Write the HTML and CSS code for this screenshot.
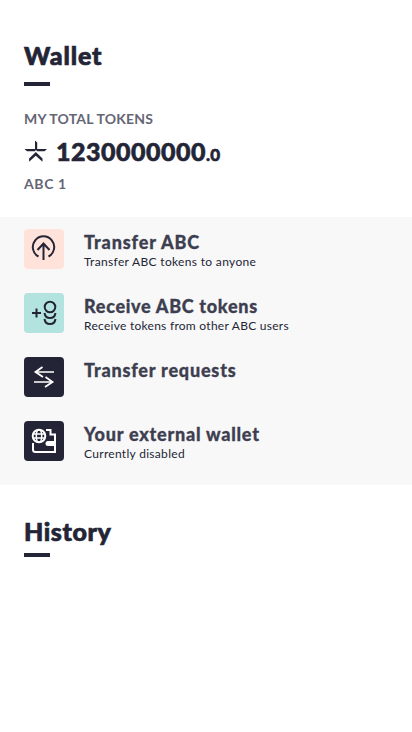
FILE: index.html
```html
<!DOCTYPE html>
<html lang="en">
<head>
<meta charset="utf-8">
<title>Wallet</title>
<link rel="stylesheet" href="styles.css">
</head>
<body>
<header class="summary">
  <h1 class="heading"><span class="wallet">Wallet</span></h1>
  <p class="label"><span class="total">MY TOTAL TOKENS</span></p>
  <div class="balance">
    <svg class="star" viewBox="0 0 24 24" fill="#232536"><path d="M11 1.500l2.200 2v8H11zM.5 10H11v2.300H3zM13 10h10l-2.500 2.300H13zM11.800 13l6.700 6.500v3.200l-6.700-6-6.700 6v-3.200z"/></svg>
    <span class="amount">1230000000</span><span class="decimal">.0</span>
  </div>
  <p class="label"><span class="ticker">ABC 1</span></p>
</header>
<main class="actions">
  <a class="action">
    <svg class="icon peach" viewBox="0 0 40 40" fill="none" stroke="#232536" stroke-width="2"><path d="M14.500 27.500A10.700 10.700 0 1 1 24.500 27.500M19.500 31V14.500M13.500 21l6-6.500 6 6.500"/></svg>
    <div><h2><span class="t1">Transfer ABC</span></h2><p><span class="d1">Transfer ABC tokens to anyone</span></p></div>
  </a>
  <a class="action">
    <svg class="icon mint" viewBox="0 0 40 40" fill="none" stroke="#232536" stroke-width="2"><path d="M8 20h9M12.500 15.500v9M20.500 20c1 6.700 10 6.700 11 0M20.500 26c1 6.700 10 6.700 11 0"/><circle cx="26" cy="14" r="5.300"/></svg>
    <div><h2><span class="t2">Receive ABC tokens</span></h2><p><span class="d2">Receive tokens from other ABC users</span></p></div>
  </a>
  <a class="action">
    <svg class="icon navy" viewBox="0 0 40 40" fill="none" stroke="#fff" stroke-width="1.800"><path stroke="#c9ccca" stroke-width="2" d="M12 15h18M10 25h18"/><path d="M18.500 10L11.500 15l7.500 5M21.500 20l7 5-7.500 5"/></svg>
    <div><h2><span class="t3">Transfer requests</span></h2></div>
  </a>
  <a class="action">
    <svg class="icon navy" viewBox="0 0 40 40" fill="none" stroke="#fff" stroke-width="2"><path d="M22 9h4.500v4.500H31V20M9 22v6.500q0 2.500 2.500 2.500H31v-6"/><path fill="#fff" stroke="none" d="M24 20h8v5h-8a2.500 2.500 0 0 1 0-5z"/><circle cx="15" cy="15" r="6.300"/><ellipse cx="15" cy="15" rx="2.700" ry="6.300" stroke-width="1.500"/><path stroke-width="1.500" d="M9 13h12M9 17h12"/></svg>
    <div><h2><span class="t4">Your external wallet</span></h2><p><span class="d4">Currently disabled</span></p></div>
  </a>
</main>
<section class="history"><h1 class="heading"><span class="hist">History</span></h1></section>
</body>
</html>
```
FILE: styles.css
```css
* { box-sizing: border-box; }
body { margin: 0; background: #fff; color: #232536; font-family: Lato, sans-serif; }
h1, h2, p { margin: 0; }
.summary { height: 217px; padding: 39px 24px 0; }
.heading { font-size: 25px; line-height: 32px; font-weight: 900; white-space: nowrap; -webkit-text-stroke: .7px; }
.heading::after { content: ""; display: block; width: 26px; height: 4px; margin-top: 11px; background: #232536; }
.label { font-size: 14px; line-height: 20px; font-weight: 700; color: #656675; }
.heading + .label { margin-top: 23px; }
.balance { display: flex; align-items: baseline; height: 32px; margin: 6px 0 7px; line-height: 32px; font-weight: 900; -webkit-text-stroke: .6px; }
.star { width: 24px; height: 24px; margin-right: 8px; align-self: center; }
.amount { font-size: 25px; letter-spacing: .5px; }
.decimal { font-size: 17px; letter-spacing: .2px; }
.actions { height: 268px; padding: 12px 24px; background: #f8f8f8; display: flex; flex-direction: column; gap: 24px; }
.action { display: flex; gap: 20px; height: 40px; white-space: nowrap; }
.icon { width: 40px; height: 40px; flex: none; border-radius: 4px; }
.peach { background: #ffe3da; }
.mint { background: #b3e3df; }
.navy { background: #232536; }
h2 { font-size: 18px; line-height: 24px; font-weight: 900; color: #3d3f50; margin-top: 1px; -webkit-text-stroke: .3px; }
.action p { font-size: 12px; line-height: 16px; }
.history { padding: 30px 24px 0; }
.history .heading::after { margin-top: 6px; }
.wallet { letter-spacing: .9px; }
.hist { letter-spacing: .6px; }
.total { letter-spacing: .2px; }
.ticker { letter-spacing: .6px; }
.t1 { letter-spacing: .87px; }
.t2 { letter-spacing: .7px; }
.t3 { letter-spacing: .8px; }
.t4 { letter-spacing: .77px; }
.d1 { letter-spacing: .33px; }
.d2 { letter-spacing: .27px; }
.d4 { letter-spacing: .3px; }
```
